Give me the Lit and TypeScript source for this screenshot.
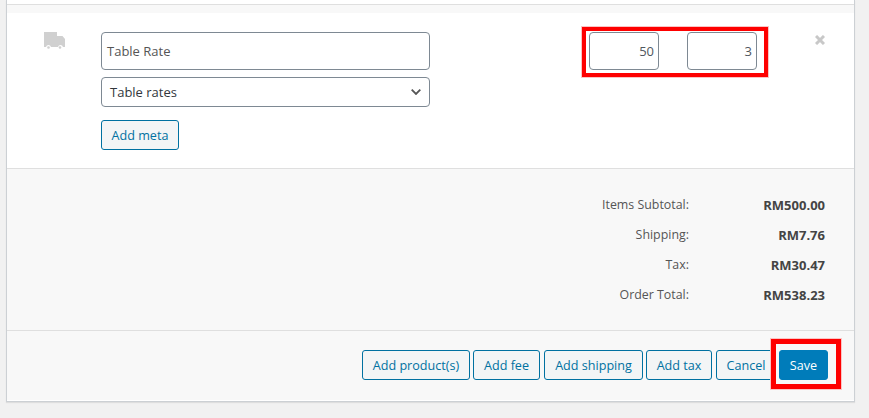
import { LitElement, html, css } from 'lit';
import { customElement } from 'lit/decorators.js';

const totals = [
  ['Items Subtotal:', 'RM500.00'],
  ['Shipping:', 'RM7.76'],
  ['Tax:', 'RM30.47'],
  ['Order Total:', 'RM538.23'],
];

@customElement('app-root')
export class AppRoot extends LitElement {
  static styles = css`
    :host {
      display: block;
      position: relative;
      width: 869px;
      height: 418px;
      overflow: hidden;
      background: #f1f1f1;
      font-family: 'Open Sans', sans-serif;
      font-size: 13px;
      color: #50575e;
    }
    .panel {
      margin: 0 14px 0 6px;
      width: 849px;
      height: 402px;
      box-sizing: border-box;
      background: #fff;
      border: 1px solid #ccd0d4;
      border-top: 0;
      box-shadow: 0 1px 1px rgba(0, 0, 0, 0.08);
    }
    .head {
      height: 4px;
      border-bottom: 1px solid #dfdfdf;
    }
    .strip {
      height: 8px;
      background: #f8f8f8;
    }
    .item {
      height: 156px;
      box-sizing: border-box;
      padding: 19px 0 0 37px;
      display: flex;
      align-items: flex-start;
      border-bottom: 1px solid #dfdfdf;
    }
    .truck {
      width: 21px;
      height: 17px;
      fill: #d0d0d0;
      flex: none;
    }
    .meta {
      margin-left: 36px;
      width: 329px;
      display: flex;
      flex-direction: column;
    }
    .field {
      box-sizing: border-box;
      height: 38px;
      border: 1px solid #7e8993;
      border-radius: 4px;
      background: #fff;
      display: flex;
      align-items: center;
      color: #50575e;
    }
    .name {
      padding-left: 5px;
      color: #555;
    }
    .select {
      margin-top: 7px;
      height: 30px;
      padding: 0 8px;
      justify-content: space-between;
      color: #32373c;
    }
    .select svg {
      width: 10px;
      height: 6px;
      fill: none;
      stroke: #555;
      stroke-width: 1.800;
    }
    .meta .btn {
      margin-top: 13px;
      align-self: flex-start;
      width: 78px;
    }
    .qty {
      margin-left: 159px;
      width: 70px;
      justify-content: flex-end;
      padding-right: 4px;
    }
    .qty + .qty {
      margin-left: 28px;
    }
    .remove {
      margin: 3px 0 0 58px;
      width: 10px;
      height: 10px;
      flex: none;
      stroke: #c8c8c8;
      stroke-width: 3;
    }
    .totals {
      height: 162px;
      box-sizing: border-box;
      padding: 21px 29px 0 0;
      background: #f8f8f8;
      border-bottom: 1px solid #dfdfdf;
      display: grid;
      grid-template-columns: 1fr 136px;
      grid-auto-rows: 30px;
      text-align: right;
      color: #555;
      font-size: 12.4px;
    }
    .totals b {
      color: #444;
      line-height: 30px;
      font-size: 13px;
    }
    .totals span {
      line-height: 30px;
    }
    .actions {
      height: 69px;
      box-sizing: border-box;
      background: #f8f8f8;
      padding: 19px 0 0 355px;
      display: flex;
      align-items: flex-start;
    }
    .btn {
      box-sizing: border-box;
      height: 30px;
      border: 1px solid #0071a1;
      border-radius: 3px;
      background: #f3f5f6;
      color: #0071a1;
      font-size: 12.6px;
      display: flex;
      align-items: center;
      justify-content: center;
      white-space: nowrap;
      flex: none;
    }
    .save {
      background: #007cba;
      border-color: #007cba;
      color: #fff;
    }
    .mark {
      position: absolute;
      box-sizing: border-box;
      border: 4px solid #fe0000;
      outline: 1px solid #fbc4c4;
      outline-offset: 0;
    }
    .mark-qty {
      left: 582px;
      top: 27px;
      width: 186px;
      height: 50px;
    }
    .mark-save {
      left: 771px;
      top: 339px;
      width: 70px;
      height: 50px;
      border-width: 5px;
    }
  `;

  render() {
    return html`
      <div class="panel">
        <div class="head"></div>
        <div class="strip"></div>
        <div class="item">
          <svg class="truck" viewBox="0 0 21 17">
            <path
              d="M0 0h13v4h5.500l2.500 3v8h-2a2.600 2.600 0 0 0-5 0H7a2.600 2.600 0 0 0-5 0H0z"
            />
            <circle cx="4.500" cy="15.500" r="1.300" />
            <circle cx="16" cy="15.500" r="1.300" />
          </svg>
          <div class="meta">
            <div class="field name">Table Rate</div>
            <div class="field select">
              Table rates
              <svg viewBox="0 0 10 6"><path d="M.7.7 5 5 9.300.7" /></svg>
            </div>
            <div class="btn">Add meta</div>
          </div>
          <div class="field qty">50</div>
          <div class="field qty">3</div>
          <svg class="remove" viewBox="0 0 10 10">
            <path d="M1 1l8 8M9 1l-8 8" />
          </svg>
        </div>
        <div class="totals">
          ${totals.map(
            ([label, value]) => html`<span>${label}</span><b>${value}</b>`
          )}
        </div>
        <div class="actions">
          <div class="btn" style="width:108px">Add product(s)</div>
          <div class="btn" style="width:67px;margin-left:3px">Add fee</div>
          <div class="btn" style="width:99px;margin-left:4px">Add shipping</div>
          <div class="btn" style="width:66px;margin-left:3px">Add tax</div>
          <div class="btn" style="width:60px;margin-left:4px">Cancel</div>
          <div class="btn save" style="width:49px;margin-left:3px">Save</div>
        </div>
      </div>
      <div class="mark mark-qty"></div>
      <div class="mark mark-save"></div>
    `;
  }
}
